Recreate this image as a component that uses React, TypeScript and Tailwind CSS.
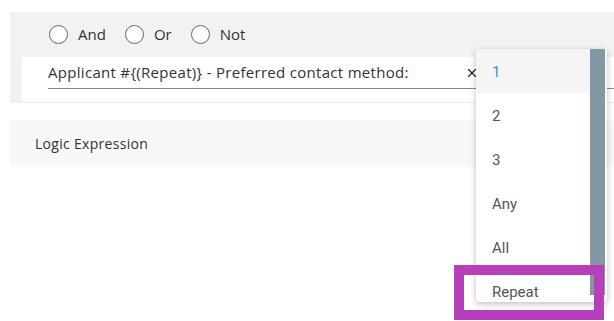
import { X } from "lucide-react";

const options = ["1", "2", "3", "Any", "All", "Repeat"];

function Radio({ label }: { label: string }) {
  return (
    <label className="flex items-center gap-[10px] text-[15px] text-[#333]">
      <span className="h-[19px] w-[19px] rounded-full border-[1.5px] border-[#666] bg-white" />
      <span>{label}</span>
    </label>
  );
}

export default function App() {
  return (
    <div
      className="relative h-[321px] w-[614px] overflow-hidden bg-white pl-[10px] pt-[12px]"
      style={{ fontFamily: '"Open Sans", "Noto Sans", sans-serif' }}
    >
      {/* Condition panel */}
      <div className="flex flex-col bg-[#f2f2f2]">
        <div className="flex h-[45px] items-center gap-[19px] pl-[39px]">
          <Radio label="And" />
          <Radio label="Or" />
          <Radio label="Not" />
        </div>
        <div className="ml-[12px] h-[46px] border-b border-[#ebebeb] bg-white pl-[26px]">
          <div className="flex h-[32px] items-center border-b border-[#8a8a8a] text-[15px] tracking-[0.3px] text-[#333]">
            <span className="w-[417px] whitespace-nowrap">
              Applicant #{"{(Repeat)}"} - Preferred contact method:
            </span>
            <X size={14} strokeWidth={2} className="text-[#222]" />
          </div>
        </div>
      </div>

      {/* Logic expression */}
      <div className="mt-[17px] flex h-[47px] items-center rounded-[4px] bg-[#f8f8f8] pl-[25px] text-[14px] tracking-[0.3px] text-[#333]">
        Logic Expression
      </div>

      {/* Dropdown */}
      <div
        className="absolute left-[476px] top-[49px] h-[253px] w-[131px] overflow-hidden rounded-[4px] bg-white shadow-[0_2px_6px_rgba(0,0,0,0.25)]"
        style={{ fontFamily: "Roboto, sans-serif" }}
      >
        {options.map((o, i) => (
          <div
            key={o}
            className={
              i === 0
                ? "flex h-[44px] items-center bg-[#f5f5f5] pl-[16px] pt-[2px] text-[15px] text-[#3b8fcf]"
                : "flex h-[44px] items-center pl-[16px] pt-[2px] text-[15px] text-[#555]"
            }
          >
            {o}
          </div>
        ))}
        <div className="absolute right-[2px] top-0 h-[246px] w-[15px] bg-[#8398a5]" />
      </div>

      {/* Highlight box */}
      <div className="absolute left-[454px] top-[265px] h-[55px] w-[150px] border-[10px] border-[#b83fba]" />
    </div>
  );
}
